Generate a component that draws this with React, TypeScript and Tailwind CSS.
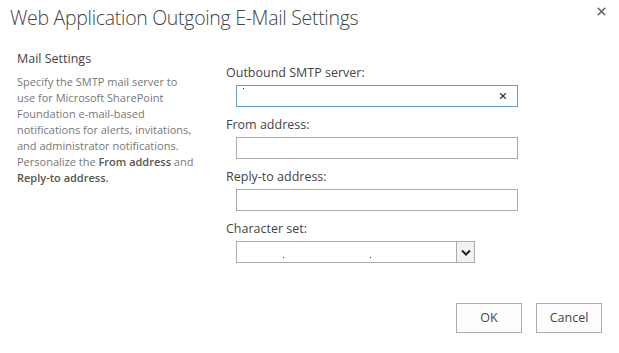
import { X } from 'lucide-react';

function Field({ label, children }: { label: string; children: React.ReactNode }) {
  return (
    <div className="flex flex-col">
      <label className="text-[12.5px] leading-[16px] text-[#444]">{label}</label>
      <div className="ml-[10px] mt-[4px]">{children}</div>
    </div>
  );
}

export default function App() {
  return (
    <div
      className="w-[619px] h-[353px] bg-white relative overflow-hidden"
      style={{ fontFamily: '"Open Sans", "Noto Sans", sans-serif' }}
    >
      {/* Title bar */}
      <div className="flex items-start justify-between pl-[10px] pr-[11px] pt-[5px]">
        <h1 className="text-[19.5px] leading-[26px] font-light text-[#444] tracking-[-0.3px]">
          Web Application Outgoing E-Mail Settings
        </h1>
        <button className="text-[#666]">
          <X className="w-[13px] h-[13px]" strokeWidth={3} />
        </button>
      </div>

      {/* Body */}
      <div className="flex pl-[17px] mt-[18px]">
        <div className="w-[192px] shrink-0">
          <div className="mt-[2px] text-[12.5px] leading-[16px] text-[#444]">Mail Settings</div>
          <p className="mt-[7px] text-[11px] leading-[16px] text-[#777] whitespace-nowrap">
            Specify the SMTP mail server to
            <br />
            use for Microsoft SharePoint
            <br />
            Foundation e-mail-based
            <br />
            notifications for alerts, invitations,
            <br />
            and administrator notifications.
            <br />
            Personalize the <b className="font-semibold text-[#555]">From address</b> and
            <br />
            <b className="font-semibold text-[#555]">Reply-to address.</b>
          </p>
        </div>

        <div className="ml-[17px] mt-[16px] flex flex-col gap-[10px]">
          <Field label="Outbound SMTP server:">
            <div className="relative w-[282px] h-[22px] border border-[#6a9fc7] bg-white">
              <span className="absolute left-[6px] top-[2px] w-[1px] h-[1px] bg-[#222]" />
              <X className="absolute right-[9px] top-[5px] w-[10px] h-[10px] text-[#333]" strokeWidth={2.75} />
            </div>
          </Field>
          <Field label="From address:">
            <div className="w-[282px] h-[22px] border border-[#ababab] bg-white" />
          </Field>
          <Field label="Reply-to address:">
            <div className="w-[282px] h-[22px] border border-[#ababab] bg-white" />
          </Field>
          <Field label="Character set:">
            <div className="relative flex w-[239px] h-[22px] border border-[#ababab] bg-white">
              <span className="absolute left-[46px] top-[15px] w-[1px] h-[1px] bg-[#444]" />
              <span className="absolute left-[133px] top-[15px] w-[1px] h-[1px] bg-[#444]" />
              <div className="ml-auto w-[18px] h-full border-l border-[#ababab] bg-[#f2f2f2] flex items-center justify-center">
                <svg width="10" height="7" viewBox="0 0 10 7">
                  <path d="M1 1.5 L5 5.5 L9 1.5" fill="none" stroke="#222" strokeWidth="2" />
                </svg>
              </div>
            </div>
          </Field>
        </div>
      </div>

      {/* Footer */}
      <div className="absolute right-[17px] bottom-[20px] flex gap-[14px]">
        <button className="w-[66px] h-[30px] border border-[#ababab] bg-[#fdfdfd] text-[12.5px] text-[#444]">
          OK
        </button>
        <button className="w-[66px] h-[30px] border border-[#ababab] bg-[#fdfdfd] text-[12.5px] text-[#444]">
          Cancel
        </button>
      </div>
    </div>
  );
}
